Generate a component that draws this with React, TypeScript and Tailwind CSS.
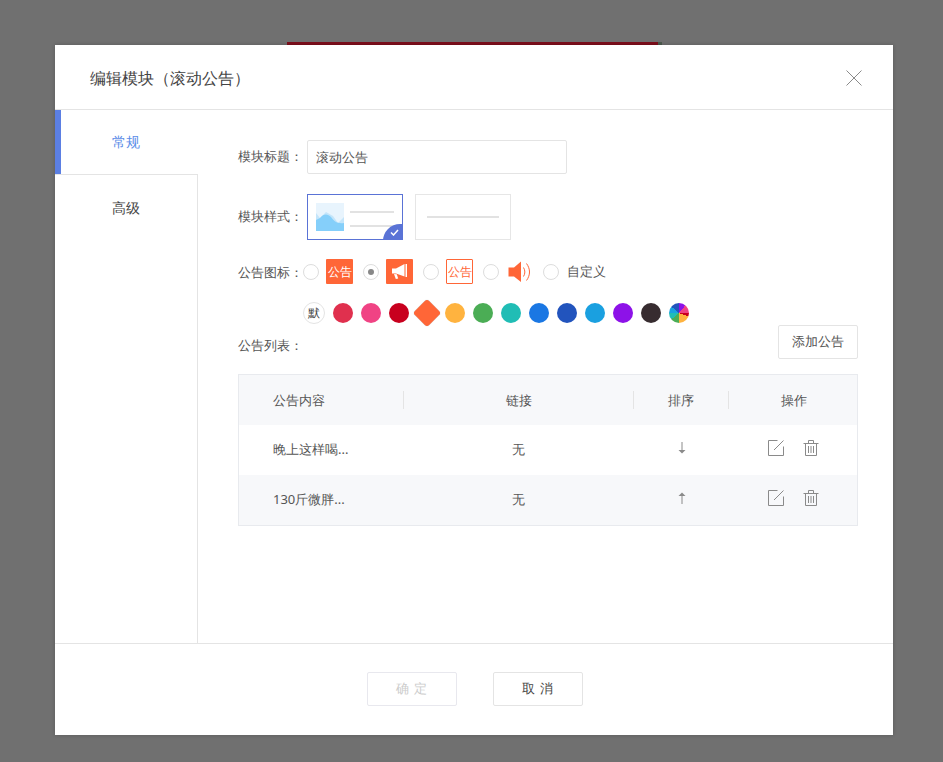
import React from "react";

const TC = "font-['Noto_Sans_CJK_TC']";

const Label = ({ text }: { text: string }) => (
  <span className="w-[69px] shrink-0 pb-[2px] text-[13px] leading-[20px] text-[#555]">
    {text}
    <span className="font-['Noto_Sans_CJK_TC']">：</span>
  </span>
);

const Radio = ({ checked }: { checked?: boolean }) => (
  <span className="flex h-4 w-4 shrink-0 items-center justify-center rounded-full border border-[#ddd] bg-white">
    {checked && <span className="h-[6px] w-[6px] rounded-full bg-[#888]" />}
  </span>
);

const Megaphone = () => (
  <svg width="17" height="17" viewBox="0 0 17 17" fill="white">
    <path d="M1 5.5 L5 5.5 L13.5 1 L13.5 13.5 L5 10.5 L1 10.5 Z" />
    <path d="M3 11 L5.8 11.2 L7.2 15.5 L4.8 16 Z" />
    <path d="M14.5 1 H16 V14 H14.5 Z" />
  </svg>
);

const Speaker = () => (
  <svg width="24" height="24" viewBox="0 0 24 24" fill="none">
    <path d="M0.5 7.5 H6 L13 1.5 V22 L6 16.5 H0.5 Z" fill="#ff6637" />
    <path d="M15.5 7.5 C17.3 10.5 17.3 13.5 15.5 16.5" stroke="#ff6637" strokeWidth="1" />
    <path d="M18.5 3.5 C22.5 9 22.5 15 18.5 20.5" stroke="#ff6637" strokeWidth="1" />
  </svg>
);

const EditIcon = () => (
  <svg width="16" height="16" viewBox="0 0 16 16" fill="none" stroke="#8a8a8a" strokeWidth="1">
    <path d="M9.5 0.5 H0.5 V15.5 H15.5 V6.5" />
    <path d="M6 10 L15.5 0.5" />
  </svg>
);

const TrashIcon = () => (
  <svg width="16" height="16" viewBox="0 0 16 16" fill="none" stroke="#8a8a8a" strokeWidth="1">
    <path d="M0.5 3.5 H15.5" />
    <path d="M5.5 3.5 V0.5 H10.5 V3.5" />
    <path d="M2.5 3.5 V15.5 H13.5 V3.5" />
    <path d="M5.5 6 V13 M8 6 V13 M10.5 6 V13" />
  </svg>
);

const ArrowIcon = ({ up }: { up?: boolean }) => (
  <svg width="8" height="12" viewBox="0 0 8 12" className={up ? "" : "rotate-180"}>
    <path d="M4 3 V12" stroke="#8a8a8a" strokeWidth="1" fill="none" />
    <path d="M0.5 4 L4 0.5 L7.5 4 Z" fill="#8a8a8a" />
  </svg>
);

const Row = ({ title, up, shaded }: { title: string; up?: boolean; shaded?: boolean }) => (
  <div className={`grid h-[50px] grid-cols-[165px_230px_95px_128px] items-center text-[13px] text-[#555] ${shaded ? "bg-[#f7f8fa]" : "bg-white"}`}>
    <span className="pl-[34px]">{title}</span>
    <span className="pr-[2px] text-center">无</span>
    <span className="flex justify-center pb-[5px]">
      <ArrowIcon up={up} />
    </span>
    <span className="flex justify-center gap-[19px] pb-[5px]">
      <EditIcon />
      <TrashIcon />
    </span>
  </div>
);

const dots = ["#e0304e", "#f04384", "#c8001e", "", "#ffb33f", "#4bad55", "#20bdb5", "#1a77e3", "#2254bd", "#1aa0e0", "#8d12e8", "#372c30"];

export default function App() {
  return (
    <div className="relative h-[762px] w-[943px] overflow-hidden bg-[#707070] pl-[55px] pt-[45px] font-['Noto_Sans_CJK_SC','Noto_Sans',sans-serif]">
      <div className="absolute left-[287px] top-[42px] h-[3px] w-[371px] bg-[#7d0f1c]" />
      <div className="absolute left-[658px] top-[42px] h-[3px] w-1 bg-[#4c5a4e]" />
      <div className="relative flex h-[690px] w-[838px] flex-col bg-white shadow-[0_0_4px_rgba(0,0,0,0.2)]">
        <header className="flex h-[65px] shrink-0 items-center justify-between border-b border-[#e4e4e4] pl-[35px] pr-[31px] pt-[2px]">
          <span className="text-base leading-6 text-[#444]">
            编辑模块<span className={TC}>（</span>滚动公告<span className={TC}>）</span>
          </span>
          <svg width="16" height="16" viewBox="0 0 16 16" stroke="#8a8a8a" strokeWidth="1">
            <path d="M0.5 0.5 L15.5 15.5 M15.5 0.5 L0.5 15.5" />
          </svg>
        </header>

        <div className="flex min-h-0 flex-1">
          <aside className="flex w-[143px] shrink-0 flex-col border-r border-[#e4e4e4]">
            <div className="-mr-px flex h-[64px] items-center justify-center border-l-[6px] border-[#5b7fe3] bg-white pr-[7px] text-sm text-[#5b8de8]">
              常规
            </div>
            <div className="flex h-[66px] items-center justify-center border-t border-[#e4e4e4] text-sm text-[#444]">
              高级
            </div>
          </aside>

          <main className="min-w-0 flex-1 pl-10 pr-[35px] pt-[30px]">
            <div className="flex h-[34px] items-center">
              <Label text="模块标题" />
              <div className="flex h-[34px] w-[260px] items-center rounded-[2px] border border-[#e4e4e4] px-2 pt-[1px] text-[13px] text-[#555]">
                滚动公告
              </div>
            </div>

            <div className="mt-5 flex h-[46px] items-center">
              <Label text="模块样式" />
              <div className="flex gap-3">
                <div className="relative flex h-[46px] w-[96px] items-center gap-[6px] overflow-hidden border border-[#5a73d6] pl-2">
                  <svg width="28" height="28" viewBox="0 0 28 28">
                    <rect width="28" height="28" fill="#e8f4fd" />
                    <path d="M0 10 L4 15 L10 9 L17 13 L22 20 L28 14 V28 H0 Z" fill="#c4e5fa" />
                    <path d="M0 17 L4 15 C8 10 12 11 15 14 C18 18 21 21 28 20 V28 H0 Z" fill="#85cffa" />
                  </svg>
                  <div className="mt-[4px] flex flex-col gap-3">
                    <span className="h-[2px] w-11 bg-[#e2e2e2]" />
                    <span className="h-[2px] w-11 bg-[#e2e2e2]" />
                  </div>
                  <span className="absolute -bottom-[19px] -right-[15px] h-[34px] w-[34px] rounded-full bg-[#5a73d6]" />
                  <svg className="absolute bottom-[3px] right-[3px]" width="9" height="7" viewBox="0 0 9 7" fill="none" stroke="white" strokeWidth="1.5">
                    <path d="M1 3.5 L3.5 6 L8 1" />
                  </svg>
                </div>
                <div className="flex h-[46px] w-[96px] items-center justify-center border border-[#e6e6e6]">
                  <span className="h-[2px] w-[72px] bg-[#e2e2e2]" />
                </div>
              </div>
            </div>

            <div className="mt-[19px] flex h-[25px] items-center">
              <span className="w-[65px] shrink-0 pt-[1px] text-[13px] leading-[20px] text-[#555]">
                公告图标<span className="font-['Noto_Sans_CJK_TC']">：</span>
              </span>
              <span className="pt-[1px]"><Radio /></span>
              <span className="ml-[7px] flex h-[25px] w-[27px] items-center justify-center rounded-[1px] bg-[#ff6637] text-xs font-medium text-white">公告</span>
              <span className="ml-[10px] pt-[1px]"><Radio checked /></span>
              <span className="ml-[7px] flex h-[25px] w-[27px] items-center justify-center rounded-[1px] bg-[#ff6637]"><Megaphone /></span>
              <span className="ml-[10px] pt-[1px]"><Radio /></span>
              <span className="ml-[7px] flex h-[25px] w-[27px] items-center justify-center rounded-[1px] border border-[#ff6637] text-xs font-medium text-[#ff6637]">公告</span>
              <span className="ml-[10px] pt-[1px]"><Radio /></span>
              <span className="ml-[9px] flex w-[24px] items-center"><Speaker /></span>
              <span className="ml-[11px] pt-[1px]"><Radio /></span>
              <span className="ml-2 pt-[1px] text-[13px] text-[#555]">自定义</span>
            </div>

            <div className="ml-[65px] mt-[17px] flex h-[24px] items-center gap-2">
              <span className="flex h-[22px] w-[22px] items-center justify-center rounded-full border border-[#e4e4e4] text-xs text-[#444]">默</span>
              {dots.map((c, i) =>
                c ? (
                  <span key={i} className="h-5 w-5 rounded-full" style={{ backgroundColor: c }} />
                ) : (
                  <span key={i} className="h-5 w-5 rotate-45 rounded-[3px] bg-[#ff6637] shadow-[0_0_1px_rgba(0,0,0,0.3)]" />
                )
              )}
              <span className="h-5 w-5 rounded-full bg-[conic-gradient(#8d12e8_0deg_40deg,#f04384_40deg_90deg,#c8001e_90deg_110deg,#ffb33f_110deg_180deg,#4bad55_180deg_230deg,#20bdb5_230deg_270deg,#1aa0e0_270deg_310deg,#2254bd_310deg_360deg)]" />
            </div>

            <div className="flex h-[34px] items-center justify-between">
              <span className="mt-[6px] text-[13px] leading-[20px] text-[#555]">
                公告列表<span className="font-['Noto_Sans_CJK_TC']">：</span>
              </span>
              <button className="flex h-[34px] w-20 items-center justify-center rounded-[2px] border border-[#e4e4e4] text-[13px] text-[#555]">
                添加公告
              </button>
            </div>

            <div className="mt-[15px] w-[620px] border border-[#e8eaee]">
              <div className="grid h-[50px] grid-cols-[165px_230px_95px_128px] items-center bg-[#f7f8fa] text-[13px] text-[#555]">
                <span className="border-r border-[#e4e4e4] pl-[34px] leading-[18px]">公告内容</span>
                <span className="border-r border-[#e4e4e4] text-center leading-[18px]">链接</span>
                <span className="border-r border-[#e4e4e4] text-center leading-[18px]">排序</span>
                <span className="pl-[2px] text-center leading-[18px]">操作</span>
              </div>
              <Row title="晚上这样喝..." />
              <Row title="130斤微胖..." up shaded />
            </div>
          </main>
        </div>

        <footer className="flex h-[92px] shrink-0 justify-center gap-9 border-t border-[#e4e4e4] pl-[2px] pt-[28px]">
          <button className="h-[34px] w-[90px] rounded-[2px] border border-[#e8e8ee] text-[13px] tracking-[1px] text-[#ccc]">确 定</button>
          <button className="h-[34px] w-[90px] rounded-[2px] border border-[#e4e4e4] text-[13px] tracking-[1px] text-[#444]">取 消</button>
        </footer>
      </div>
    </div>
  );
}
